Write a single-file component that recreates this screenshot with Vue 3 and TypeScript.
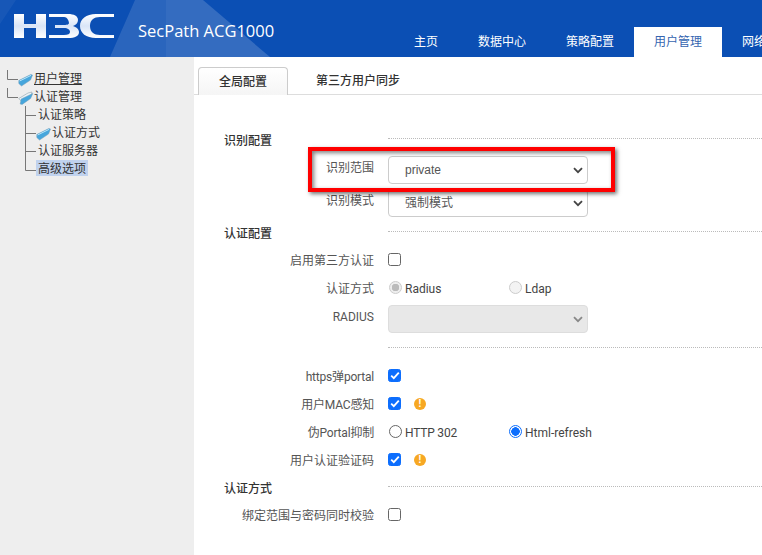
<script setup lang="ts">
const navs = [
  { t: '主页', w: 64 },
  { t: '数据中心', w: 88 },
  { t: '策略配置', w: 88 },
  { t: '用户管理', w: 88, on: true },
  { t: '网络', w: 64 },
]
</script>

<template>
  <div class="page">
    <header class="top">
      <svg class="facets" width="762" height="57" viewBox="0 0 762 57">
        <path d="M110 57L135 0h31v57z" fill="#fff" fill-opacity=".13" />
        <path d="M166 0h37l67 57H166z" fill="#fff" fill-opacity=".17" />
        <path d="M0 0h16L0 24z" fill="#fff" fill-opacity=".05" />
      </svg>
      <svg class="logo" width="100" height="24" viewBox="0 0 100 24">
        <defs>
          <linearGradient id="lg" x1="0" y1="0" x2="0" y2="1">
            <stop offset="0" stop-color="#ffffff" />
            <stop offset="0.5" stop-color="#d9e5f7" />
            <stop offset="1" stop-color="#ffffff" />
          </linearGradient>
        </defs>
        <path fill="url(#lg)" d="M0 0h10v10h12V0h10v24H22V14H10v10H0z" />
        <path fill="url(#lg)" d="M35 0h19c6 0 10 2 10 6 0 3-2 5-5 6 3 1 6 3 6 6 0 4-4 6-11 6H35v-3h15c4 0 6-1 6-3s-2-4-6-4H41v-3h9c4 0 5-1 5-2s-1-6-5-6H35z" />
        <path fill="url(#lg)" d="M100 0H82C72 0 66 5 66 12s6 12 16 12h18v-3H86c-6 0-10-3-10-9s4-9 10-9h14z" />
      </svg>
      <div class="product">SecPath ACG1000</div>
      <nav class="nav">
        <a v-for="n in navs" :key="n.t" class="nav-item" :class="{ on: n.on }" :style="{ width: n.w + 'px' }">{{ n.t }}</a>
      </nav>
    </header>

    <div class="body">
      <aside class="side">
        <div class="t-row">
          <svg class="conn" width="11" height="18"><path d="M.5 0v9.5H11" /></svg>
          <svg class="folder" width="16" height="18" viewBox="0 0 16 18"><path d="M.8 10.5L12.8 4.5l1.7.5-2 5-9 6-2.7-2.5z" fill="#46a6dc" stroke="#6f9db8" stroke-width=".5" /><path d="M1.6 11L13 5.4" stroke="#b8e4f8" stroke-width="1" fill="none" /></svg>
          <span class="t-txt link">用户管理</span>
        </div>
        <div class="t-row">
          <svg class="conn" width="11" height="18"><path d="M.5 0v9.5H11" /></svg>
          <svg class="folder" width="16" height="18" viewBox="0 0 16 18"><path d="M.8 10.5L10 5l4-1-1 4-9 6z" fill="#eef3f6" stroke="#8fa3ad" stroke-width=".6" /><path d="M2.2 16l1-5L14.8 5.4 12.6 10.5 4.2 16.4z" fill="#46a6dc" stroke="#6f9db8" stroke-width=".5" /></svg>
          <span class="t-txt">认证管理</span>
        </div>
        <div class="t-row sub">
          <svg class="conn" width="11" height="18"><path d="M.5 0v18M.5 9.5H11" /></svg>
          <span class="t-txt pad">认证策略</span>
        </div>
        <div class="t-row sub">
          <svg class="conn" width="11" height="18"><path d="M.5 0v18M.5 9.5H11" /></svg>
          <svg class="folder" width="16" height="18" viewBox="0 0 16 18"><path d="M.8 10.5L12.8 4.5l1.7.5-2 5-9 6-2.7-2.5z" fill="#46a6dc" stroke="#6f9db8" stroke-width=".5" /><path d="M1.6 11L13 5.4" stroke="#b8e4f8" stroke-width="1" fill="none" /></svg>
          <span class="t-txt">认证方式</span>
        </div>
        <div class="t-row sub">
          <svg class="conn" width="11" height="18"><path d="M.5 0v18M.5 9.5H11" /></svg>
          <span class="t-txt pad">认证服务器</span>
        </div>
        <div class="t-row sub">
          <svg class="conn" width="11" height="18"><path d="M.5 0v10.5H11" /></svg>
          <span class="t-txt pad sel">高级选项</span>
        </div>
      </aside>

      <main class="main">
        <div class="tabs">
          <div class="tab active">全局配置</div>
          <div class="tab">第三方用户同步</div>
        </div>

        <div class="form">
          <div class="sec first"><span class="sec-t">识别配置</span><i class="dots"></i></div>
          <div class="row r1"><label class="upx">识别范围</label><div class="sel-box"><span class="pv">private</span><svg class="chev" width="10" height="7" viewBox="0 0 10 7"><path d="M1 1.2l4 4 4-4" /></svg></div></div>
          <div class="row r2"><label class="upx">识别模式</label><div class="sel-box"><span>强制模式</span><svg class="chev" width="10" height="7" viewBox="0 0 10 7"><path d="M1 1.2l4 4 4-4" /></svg></div></div>
          <div class="sec s2"><span class="sec-t">认证配置</span><i class="dots"></i></div>
          <div class="row ctl r3"><label>启用第三方认证</label><span class="cb"></span></div>
          <div class="row rad r4"><label>认证方式</label><span class="rd dis"></span><span class="opt o1">Radius</span><span class="rd off"></span><span class="opt">Ldap</span></div>
          <div class="row r5"><label class="up">RADIUS</label><div class="sel-box disabled"><svg class="chev" width="10" height="7" viewBox="0 0 10 7"><path d="M1 1.2l4 4 4-4" /></svg></div></div>
          <i class="dots line"></i>
          <div class="row ctl r6"><label class="tight">https弹portal</label><span class="cb on"><svg width="10" height="9" viewBox="0 0 10 9"><path d="M1.2 4.6l2.6 2.6 5-5.6" /></svg></span></div>
          <div class="row ctl r7"><label class="tight">用户MAC感知</label><span class="cb on"><svg width="10" height="9" viewBox="0 0 10 9"><path d="M1.2 4.6l2.6 2.6 5-5.6" /></svg></span><span class="warn">!</span></div>
          <div class="row ctl r8"><label class="tight">伪Portal抑制</label><span class="rd"></span><span class="opt o1 tight">HTTP 302</span><span class="rd chk"></span><span class="opt">Html-refresh</span></div>
          <div class="row ctl r9"><label>用户认证验证码</label><span class="cb on"><svg width="10" height="9" viewBox="0 0 10 9"><path d="M1.2 4.6l2.6 2.6 5-5.6" /></svg></span><span class="warn">!</span></div>
          <div class="sec s3"><span class="sec-t">认证方式</span><i class="dots"></i></div>
          <div class="row ctl r10"><label>绑定范围与密码同时校验</label><span class="cb"></span></div>
        </div>

        <div class="callout"></div>
      </main>
    </div>
  </div>
</template>

<style>
html, body { margin: 0; padding: 0; overflow: hidden; background: #fff; }
</style>

<style scoped>
.page {
  width: 762px;
  height: 555px;
  overflow: hidden;
  font-family: Roboto, "Noto Sans CJK SC", "Liberation Sans", sans-serif;
  font-size: 12px;
  color: #333;
}
.top {
  height: 57px;
  display: flex;
  background: #0b4fb4;
  position: relative;
  overflow: hidden;
}
.facets { position: absolute; left: 0; top: 0; }
.logo { margin: 14px 0 0 14px; flex: none; position: relative; }
.product {
  margin: 20px 0 0 24px;
  font-family: "Open Sans", "Liberation Sans", sans-serif;
  font-size: 16.5px;
  line-height: 22px;
  color: #fff;
  white-space: nowrap;
  flex: none;
  position: relative;
}
.nav { display: flex; position: absolute; left: 394px; bottom: 0; white-space: nowrap; }
.nav-item {
  height: 30px;
  line-height: 30px;
  text-align: center;
  color: #fff;
  flex: none;
}
.nav-item.on { background: #fff; color: #3565b0; }
.body { display: flex; height: 498px; }
.side {
  width: 194px;
  flex: none;
  background: #eee;
  padding: 13px 0 0 7px;
  box-sizing: border-box;
}
.t-row { display: flex; align-items: center; height: 18px; }
.t-row.sub { padding-left: 18px; }
.conn { flex: none; }
.conn path { stroke: #777; fill: none; }
.folder { flex: none; }
.t-txt { height: 16px; line-height: 18px; margin-bottom: 2px; color: #333; white-space: nowrap; }
.t-txt.pad { padding: 0 2px; }
.link { text-decoration: underline; }
.sel { background: #c0d2ee; }
.main { flex: 1; position: relative; }
.tabs {
  display: flex;
  height: 38px;
  box-sizing: border-box;
  padding: 10px 0 0 4px;
  border-bottom: 1px solid #ddd;
}
.tab {
  width: 88px;
  height: 27px;
  line-height: 28px;
  text-align: center;
  font-weight: 500;
  color: #333;
}
.tab + .tab { width: 122px; margin-left: 9px; }
.tab.active {
  background: linear-gradient(#fff, #f5f5f5);
  border: 1px solid #ccc;
  border-bottom: 0;
  border-radius: 4px 4px 0 0;
}
.form { padding-left: 30px; }
.sec { display: flex; align-items: center; height: 18px; }
.sec-t { width: 164px; font-weight: 500; color: #333; flex: none; position: relative; top: 1px; }
.dots { flex: 1; border-top: 1px dotted #bbb; display: block; }
.dots.line { margin: 14px 0 0 164px; }
.first { margin-top: 34px; }
.row { display: flex; align-items: center; }
.row label { width: 150px; margin-right: 14px; text-align: right; flex: none; white-space: nowrap; color: #555; }
.row label.up { margin-bottom: 4px; }
.row label.upx { margin-bottom: 7px; }
.tight { letter-spacing: -0.2px; }
.ctl { height: 21px; }
.rad { height: 19px; }
.sel-box {
  width: 200px;
  height: 28px;
  box-sizing: border-box;
  border: 1px solid #ccc;
  border-radius: 4px;
  background: #fff;
  padding-left: 16px;
  display: flex;
  align-items: center;
  justify-content: space-between;
  color: #555;
}
.sel-box span { line-height: 26px; }
.pv { font-family: "Liberation Sans", sans-serif; font-size: 12px; }
.sel-box.disabled { background: #e8e8e8; border-color: #ddd; }
.chev { margin: 0 4px 0 auto; }
.chev path { fill: none; stroke: #444; stroke-width: 1.8; }
.disabled .chev path { stroke: #888; }
.r1 { margin-top: 9px; }
.r2 { margin-top: 5px; }
.s2 { margin-top: 5px; }
.r3 { margin-top: 9px; }
.r4 { margin-top: 8px; }
.r5 { margin-top: 8px; }
.r6 { margin-top: 17px; }
.r7 { margin-top: 7px; }
.r8 { margin-top: 7px; }
.r9 { margin-top: 7px; }
.s3 { margin-top: 7px; }
.r10 { margin-top: 9px; }
.cb {
  width: 13px;
  height: 13px;
  box-sizing: border-box;
  border: 1px solid #666;
  border-radius: 2.5px;
  flex: none;
  display: flex;
  align-items: center;
  justify-content: center;
  background: #fff;
}
.cb.on { background: #0d6efd; border-color: #0d6efd; }
.cb svg path { fill: none; stroke: #fff; stroke-width: 1.8; }
.rd {
  width: 13px;
  height: 13px;
  box-sizing: border-box;
  border: 1px solid #666;
  border-radius: 50%;
  background: #fff;
  flex: none;
  margin-left: 1px;
}
.rd + .opt + .rd { margin-left: 0; }
.rd.dis { border-color: #ccc; background: radial-gradient(circle, #bbb 0 3.5px, #eee 4px); }
.rd.off { border-color: #ccc; background: #f3f3f3; }
.rd.chk { border: 1px solid #0d6efd; background: radial-gradient(circle, #0d6efd 0 4px, #fff 4.5px); }
.opt { margin-left: 3px; padding-top: 2px; color: #444; white-space: nowrap; }
.opt.o1 { width: 104px; }
.warn {
  width: 12px;
  height: 12px;
  margin-left: 13px;
  border-radius: 50%;
  background: #f7a823;
  color: #fff;
  font: bold 10px/12px "Liberation Sans", sans-serif;
  text-align: center;
  flex: none;
}
.callout {
  position: absolute;
  left: 114px;
  top: 90px;
  width: 307px;
  height: 45px;
  box-sizing: border-box;
  border: 4px solid #f00;
  box-shadow: 2px 2px 4px rgba(0, 0, 0, .55), inset 2px 2px 4px rgba(0, 0, 0, .5);
}
</style>
